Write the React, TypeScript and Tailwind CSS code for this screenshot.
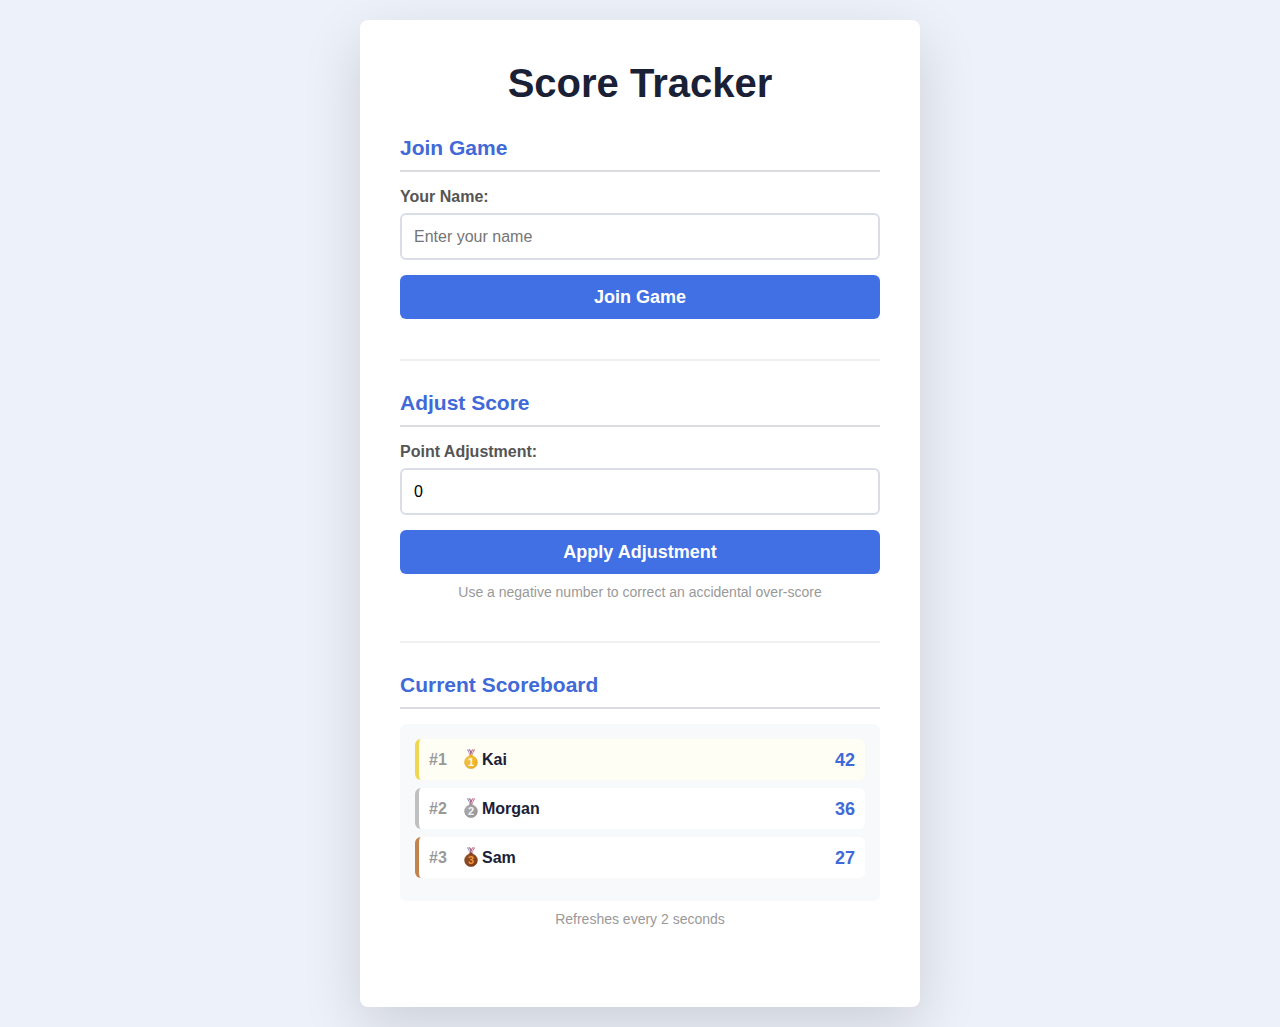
import { useState, type ReactNode } from "react";

type Metal = { light: string; base: string; dark: string; digit: string };

type Player = {
  name: string;
  score: number;
  row: string;
  metal: Metal;
};

const players: Player[] = [
  {
    name: "Kai",
    score: 42,
    row: "border-[#f0d550] bg-[#fffef5]",
    metal: { light: "#f8cb3c", base: "#e9a822", dark: "#d49a24", digit: "#fffbe6" },
  },
  {
    name: "Morgan",
    score: 36,
    row: "border-[#c0c0c0] bg-white",
    metal: { light: "#b0b0b0", base: "#929292", dark: "#8a8a8a", digit: "#f2f2f2" },
  },
  {
    name: "Sam",
    score: 27,
    row: "border-[#c0844c] bg-white",
    metal: { light: "#9c5026", base: "#7d3a18", dark: "#6a3216", digit: "#f0983c" },
  },
];

function Medal({ place, metal }: { place: number; metal: Metal }) {
  const fill = `medal-${place}`;
  return (
    <svg viewBox="0 0 18 22" className="h-[22px] w-[18px] shrink-0" aria-hidden="true">
      <defs>
        <linearGradient id={fill} x1="0" y1="0" x2="1" y2="1">
          <stop offset="0" stopColor={metal.light} />
          <stop offset="1" stopColor={metal.base} />
        </linearGradient>
      </defs>
      <path d="M5 0.5h3l2.2 5.6H8z" fill="#6a72b8" />
      <path d="M6 0.5h1l2.3 5.4h-1z" fill="#f3eef5" />
      <path d="M13 0.5h-3L7.8 6.1H10z" fill="#b04c68" />
      <path d="M12 0.5h-1L8.7 5.9h1z" fill="#f3eef5" />
      <path d="M7.3 0.5h.9l1.4 3.6-.4 1z" fill="#c05a70" />
      <rect x="7.4" y="5.6" width="3.2" height="2" rx="0.8" fill={metal.base} />
      <circle cx="9" cy="13.2" r="6.4" fill={`url(#${fill})`} stroke={metal.dark} strokeWidth="0.5" />
      <text
        x="9"
        y="17"
        textAnchor="middle"
        fontSize="11"
        fontWeight="700"
        fill={metal.digit}
      >
        {place}
      </text>
    </svg>
  );
}

function Section({ title, last, children }: { title: string; last?: boolean; children: ReactNode }) {
  return (
    <section
      className={
        last ? "pb-[39px]" : "mb-[29px] border-b-2 border-[#f0f0f0] pb-10"
      }
    >
      <h2 className="mb-[15px] border-b-2 border-[#dcdce0] pb-[9px] text-[21px] leading-[26px] font-bold text-[#4169d8]">
        {title}
      </h2>
      {children}
    </section>
  );
}

const label = "mb-[6px] block text-base leading-5 font-bold text-[#555555]";
const field =
  "mb-[15px] block h-[47px] w-full rounded-md border-2 border-[#dadce8] bg-white px-3 text-base text-black placeholder:text-[#757575] outline-none";
const button =
  "block h-11 w-full rounded-md bg-[#4070e4] text-lg leading-5 font-bold text-white";
const hint = "mt-[9px] text-center text-[14px] leading-[18px] text-[#999999]";

export default function App() {
  const [name, setName] = useState("");
  const [points, setPoints] = useState("0");

  return (
    <div className="min-h-screen bg-[#edf1fa] p-5 font-['Liberation_Sans',Arial,sans-serif]">
      <main className="mx-auto max-w-[560px] rounded-lg bg-white p-10 shadow-[0_20px_60px_rgba(0,0,0,0.14)]">
        <h1 className="mb-[29px] text-center text-[40px] leading-[46px] font-bold text-[#1a2035]">
          Score Tracker
        </h1>

        <Section title="Join Game">
          <form onSubmit={(e) => e.preventDefault()}>
            <label htmlFor="name" className={label}>
              Your Name:
            </label>
            <input
              id="name"
              type="text"
              placeholder="Enter your name"
              value={name}
              onChange={(e) => setName(e.target.value)}
              className={field}
            />
            <button type="submit" className={button}>
              Join Game
            </button>
          </form>
        </Section>

        <Section title="Adjust Score">
          <form onSubmit={(e) => e.preventDefault()}>
            <label htmlFor="points" className={label}>
              Point Adjustment:
            </label>
            <input
              id="points"
              type="number"
              value={points}
              onChange={(e) => setPoints(e.target.value)}
              className={field}
            />
            <button type="submit" className={button}>
              Apply Adjustment
            </button>
          </form>
          <p className={hint}>Use a negative number to correct an accidental over-score</p>
        </Section>

        <Section title="Current Scoreboard" last>
          <div className="rounded-md bg-[#f8f9fb] p-[15px]">
            <ol className="mb-2 flex flex-col gap-2">
              {players.map((p, i) => (
                <li
                  key={p.name}
                  className={`flex h-[41px] items-center rounded-md border-l-4 px-[10px] font-bold ${p.row}`}
                >
                  <span className="w-[33px] text-base text-[#999999]">#{i + 1}</span>
                  <Medal place={i + 1} metal={p.metal} />
                  <span className="ml-[2px] flex-1 text-base text-[#1a2035]">{p.name}</span>
                  <span className="text-lg text-[#4169d8]">{p.score}</span>
                </li>
              ))}
            </ol>
          </div>
          <p className={hint}>Refreshes every 2 seconds</p>
        </Section>
      </main>
    </div>
  );
}
